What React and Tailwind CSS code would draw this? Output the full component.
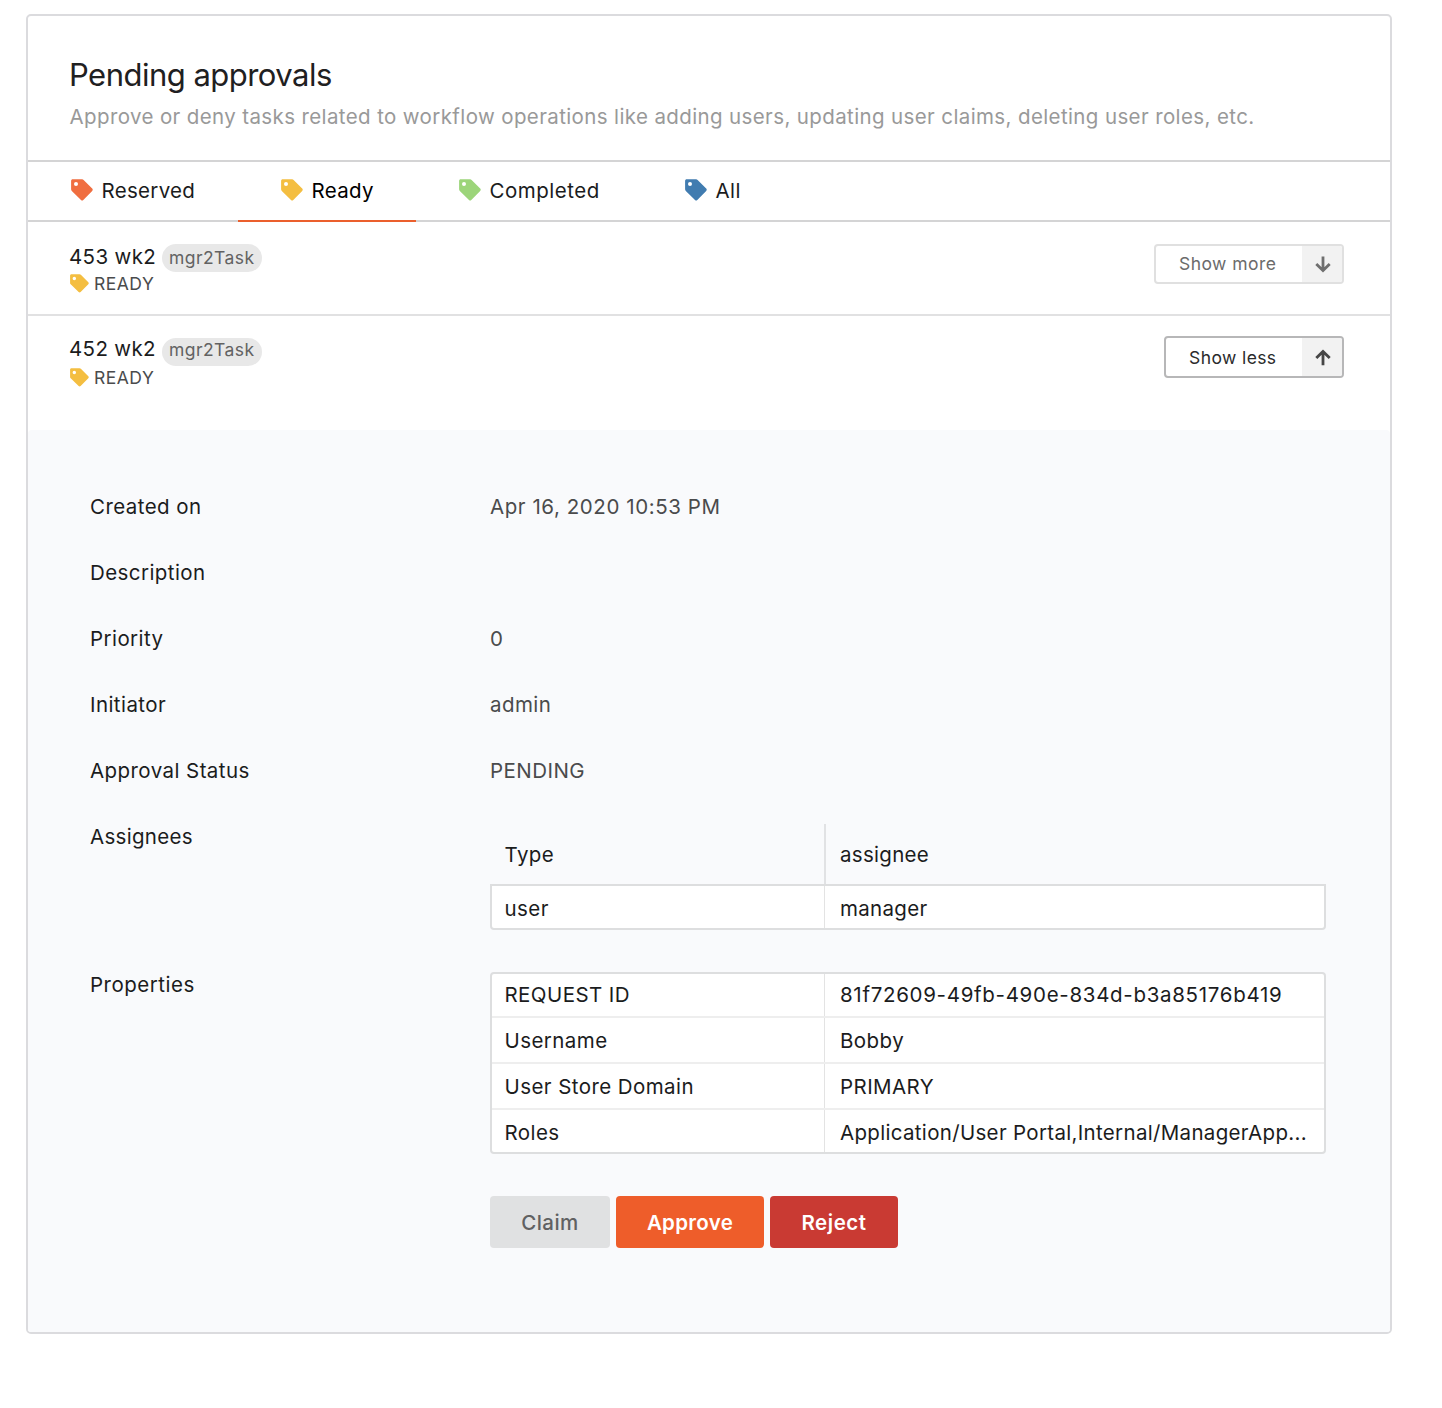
import React from "react";

function Tag({ className }) {
  return (
    <svg viewBox="0 0 22 22" className={className} fill="currentColor" aria-hidden="true">
      <path
        fillRule="evenodd"
        d="M1.7 0.3H11.1C11.7 0.3 12.2 0.5 12.6 0.9L21.2 9.6C21.9 10.3 21.9 11.2 21.2 11.9L12.3 20.9C11.6 21.6 10.7 21.6 10 20.9L0.8 11.9C0.3 11.4 0.1 10.9 0.1 10.3V1.9C0.1 1 0.8 0.3 1.7 0.3ZM5 3.1A2 2 0 1 0 5 7.1A2 2 0 1 0 5 3.1Z"
      />
    </svg>
  );
}

function Arrow({ up, className }) {
  return (
    <svg
      viewBox="0 0 16 17"
      className={`h-[17px] w-4 ${className}`}
      fill="none"
      stroke="currentColor"
      strokeWidth="2.8"
      aria-hidden="true"
    >
      <path d={up ? "M8 16.2V2.4M1.3 9.1L8 2.4L14.7 9.1" : "M8 0.6V14.4M1.3 7.9L8 14.6L14.7 7.9"} />
    </svg>
  );
}

function Tab({ children, color, className, text = "text-[#1b1c1d]" }) {
  return (
    <div className={`flex h-[60px] items-start border-b-2 pl-[42.5px] pt-[14px] ${className}`}>
      <Tag className={`mt-[3px] h-[22px] w-[22px] shrink-0 ${color}`} />
      <span className={`ml-[9px] leading-[30px] ${text}`}>{children}</span>
    </div>
  );
}

function Field({ label, children }) {
  return (
    <div className="flex h-[66px] leading-[30px]">
      <div className="w-[400px] shrink-0 text-[#1b1c1d]">{label}</div>
      <div className="text-[#4a4b4c]">{children}</div>
    </div>
  );
}

const properties = [
  ["REQUEST ID", "81f72609-49fb-490e-834d-b3a85176b419", "tracking-[0.69px]"],
  ["Username", "Bobby", ""],
  ["User Store Domain", "PRIMARY", ""],
  ["Roles", "Application/User Portal,Internal/ManagerApp...", "tracking-[0.32px]"],
];

export default function App() {
  return (
    <div className="min-h-[1408px] bg-white pl-[26px] pt-[14px] font-['Inter',sans-serif] text-[20.5px] tracking-[0.43px]">
      <main className="h-[1320px] w-[1366px] overflow-hidden rounded-[5px] border-2 border-[#dbdbde]">
        <header className="h-[146px] border-b-2 border-[#d4d4d5] pl-[42px] pt-[39px]">
          <h1 className="-ml-px text-[31px] leading-10 tracking-[-0.52px] text-[#1f2021]">Pending approvals</h1>
          <p className="-ml-[0.5px] mt-[7px] leading-[30px] tracking-[0.378px] text-[#999999]">
            Approve or deny tasks related to workflow operations like adding users, updating user claims, deleting user
            roles, etc.
          </p>
        </header>

        <nav className="flex h-[60px]">
          <Tab color="text-[#f06e40]" className="w-[210px] border-[#d4d4d5]">
            <span className="tracking-[0.3px]">Reserved</span>
          </Tab>
          <Tab color="text-[#f4be41]" className="w-[178px] border-[#eb5f2d]" text="text-black">
            <span className="tracking-[0.3px]">Ready</span>
          </Tab>
          <Tab color="text-[#9cd57a]" className="w-[226px] border-[#d4d4d5]">
            <span className="tracking-[0.5px]">Completed</span>
          </Tab>
          <Tab color="text-[#417cb0]" className="flex-1 border-[#d4d4d5]">All</Tab>
        </nav>

        <section className="flex h-[94px] items-start justify-between border-b-2 border-[#e1e1e2] pl-[42px] pr-[46px] pt-[22px]">
          <div>
            <div className="flex h-7 items-start">
              <span className="-ml-px w-[88px] whitespace-nowrap leading-[26px] tracking-[0.35px] text-[#1b1c1d]">453 wk2</span>
              <span className="ml-[5px] h-7 w-[100px] rounded-full bg-[#e8e8e8] pl-[7px] text-[17.5px] leading-7 tracking-[0.45px] text-[#626262]">
                mgr2Task
              </span>
            </div>
            <div className="mt-px flex items-start">
              <Tag className="-ml-[0.5px] mt-[0.5px] h-[19px] w-[19px] text-[#f4be41]" />
              <span className="ml-[5.5px] text-[17.5px] leading-[22px] tracking-[0.5px] text-[#4a4b4c]">READY</span>
            </div>
          </div>
          <button className="flex h-10 w-[190px] overflow-hidden rounded-[4px] border-2 border-[#e0e0e0] bg-white">
            <span className="flex-1 pl-[23px] text-left text-[17.5px] leading-[36px] tracking-[0.45px] text-[#6b6b6b]">Show more</span>
            <span className="flex h-full w-10 items-center justify-center bg-[#f2f2f2] pl-px">
              <Arrow className="text-[#6f6f6f]" />
            </span>
          </button>
        </section>

        <section className="flex h-[114px] items-start justify-between pl-[42px] pr-[46px] pt-5">
          <div>
            <div className="flex h-[30px] items-start">
              <span className="-ml-px w-[88px] whitespace-nowrap leading-[26px] tracking-[0.35px] text-[#1b1c1d]">452 wk2</span>
              <span className="ml-[5px] mt-[2px] h-7 w-[100px] rounded-full bg-[#e8e8e8] pl-[7px] text-[17.5px] leading-6 tracking-[0.45px] text-[#626262]">
                mgr2Task
              </span>
            </div>
            <div className="mt-px flex items-start">
              <Tag className="-ml-[0.5px] mt-[0.5px] h-[19px] w-[19px] text-[#f4be41]" />
              <span className="ml-[5.5px] text-[17.5px] leading-[22px] tracking-[0.5px] text-[#4a4b4c]">READY</span>
            </div>
          </div>
          <button className="flex h-[42px] w-[180px] overflow-hidden rounded-[4px] border-2 border-[#b7b7b8] bg-white">
            <span className="flex-1 pl-[23px] text-left text-[17.5px] leading-[39px] tracking-[0.4px] text-[#2a2b2c]">Show less</span>
            <span className="flex h-full w-10 items-center justify-center bg-[#f2f2f2] pl-px">
              <Arrow up className="text-[#464646]" />
            </span>
          </button>
        </section>

        <section className="h-[902px] rounded-t-[4px] bg-[#f9fafc] pl-[62px] pr-16 pt-[62px]">
          <Field label="Created on"><span className="tracking-[0.57px]">Apr 16, 2020 10:53 PM</span></Field>
          <Field label="Description" />
          <Field label="Priority">0</Field>
          <Field label="Initiator">admin</Field>
          <Field label="Approval Status"><span className="tracking-[0.45px]">PENDING</span></Field>

          <div className="flex h-[148px] text-[#1b1c1d]">
            <div className="w-[400px] shrink-0 leading-[30px] tracking-[0.3px]">Assignees</div>
            <div className="mt-[2px] h-[106px] w-[836px]">
              <div className="flex h-[60px] leading-[62px]">
                <div className="w-[336px] border-r-2 border-[#e1e2e4] pl-[14.5px]">Type</div>
                <div className="pl-[14px] tracking-[0.3px]">assignee</div>
              </div>
              <div className="flex h-[46px] overflow-hidden rounded-b-[4px] border-2 border-[#dddedf] bg-white leading-[46px]">
                <div className="w-[333px] border-r border-[#e3e3e3] pl-[12.5px]">user</div>
                <div className="pl-[15px] tracking-[0.3px]">manager</div>
              </div>
            </div>
          </div>

          <div className="flex h-[224px] text-[#1b1c1d]">
            <div className="w-[400px] shrink-0 leading-[30px] tracking-[0.5px]">Properties</div>
            <div className="mt-[2px] h-[182px] w-[836px] overflow-hidden rounded-[4px] border-2 border-[#dddedf] bg-white">
              {properties.map(([name, value, tracking]) => (
                <div key={name} className="flex h-[46px] border-b-2 border-[#eeeeee] leading-[46px] first:h-[44px] first:leading-[42px] last:border-b-0">
                  <div className="w-[333px] border-r border-[#e3e3e3] pl-[12.5px]">{name}</div>
                  <div className={`pl-[15px] whitespace-nowrap ${tracking}`}>{value}</div>
                </div>
              ))}
            </div>
          </div>

          <div className="ml-[400px] mt-[2px] flex gap-[6px] leading-[53px]">
            <button className="h-[52px] w-[120px] rounded-[4px] bg-[#e0e1e2] font-medium text-[#606162]">Claim</button>
            <button className="h-[52px] w-[148px] rounded-[4px] bg-[#ee5d2a] font-semibold tracking-[0.3px] text-white">Approve</button>
            <button className="h-[52px] w-[128px] rounded-[4px] bg-[#c93a33] font-semibold tracking-[0.55px] text-white">Reject</button>
          </div>
        </section>
      </main>
    </div>
  );
}
